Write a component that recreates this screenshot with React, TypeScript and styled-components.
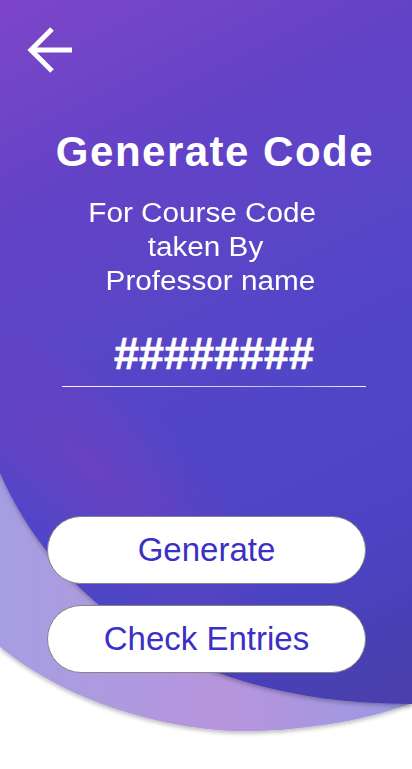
import React from "react";
import styled, { createGlobalStyle } from "styled-components";

const GlobalStyle = createGlobalStyle`
  html, body {
    margin: 0;
    padding: 0;
    background: #ffffff;
  }
  body {
    font-family: "Liberation Sans", Arial, sans-serif;
  }
  * { box-sizing: border-box; }
`;

const Screen = styled.div`
  position: relative;
  width: 412px;
  height: 769px;
  overflow: hidden;
  background: #ffffff;
`;

const Backdrop = styled.svg`
  position: absolute;
  inset: 0;
  width: 412px;
  height: 769px;
  z-index: 0;
`;

const Content = styled.main`
  position: relative;
  z-index: 1;
  display: flex;
  flex-direction: column;
  height: 100%;
`;

const BackButton = styled.button`
  display: flex;
  width: 50px;
  height: 48px;
  margin: 26px 0 0 24px;
  padding: 0;
  border: 0;
  background: transparent;
  cursor: pointer;
`;

const Title = styled.h1`
  margin: 54px 0 0;
  padding-left: 18px;
  font-size: 42px;
  line-height: 48px;
  font-weight: 700;
  letter-spacing: 1.5px;
  color: #ffffff;
  text-align: center;
`;

const Subtitle = styled.div`
  display: flex;
  flex-direction: column;
  margin-top: 20px;
  color: #ffffff;
`;

const SubLine = styled.span<{ $shift: number }>`
  display: block;
  font-size: 27px;
  line-height: 34px;
  text-align: center;
  transform: scaleX(1.1);
  padding-left: ${(p) => (p.$shift > 0 ? p.$shift * 2 : 0)}px;
  padding-right: ${(p) => (p.$shift < 0 ? -p.$shift * 2 : 0)}px;
`;

const CodeField = styled.div`
  margin: 30px 46px 0 62px;
  display: flex;
  flex-direction: column;
  align-items: center;
`;

const CodeText = styled.span`
  font-size: 45px;
  line-height: 52px;
  font-weight: 700;
  color: #ffffff;
  -webkit-text-stroke: 0.6px #ffffff;
`;

const Underline = styled.div`
  align-self: stretch;
  height: 1px;
  margin-top: 6px;
  background: linear-gradient(
    90deg,
    rgba(255, 255, 255, 0.95) 0%,
    rgba(255, 255, 255, 0.75) 55%,
    rgba(255, 255, 255, 0.6) 75%,
    rgba(255, 255, 255, 0.95) 100%
  );
`;

const Actions = styled.div`
  display: flex;
  flex-direction: column;
  gap: 21px;
  margin: 129px 46px 0 47px;
`;

const PillButton = styled.button`
  height: 68px;
  width: 100%;
  border: 1px solid #858585;
  border-radius: 34px;
  background: #ffffff;
  color: #3b2fc6;
  font-family: "Liberation Sans", Arial, sans-serif;
  font-size: 33px;
  cursor: pointer;
`;

const BackArrow = () => (
  <svg width="50" height="48" viewBox="0 0 50 48" aria-hidden="true">
    <path
      d="M28 3 L7 24 L28 45 M9 24 H48"
      fill="none"
      stroke="#ffffff"
      strokeWidth="5"
      strokeLinecap="butt"
      strokeLinejoin="miter"
    />
  </svg>
);

const Background = () => (
  <Backdrop viewBox="0 0 412 769" aria-hidden="true">
    <defs>
      <linearGradient id="lightFill" x1="0" y1="0" x2="412" y2="0" gradientUnits="userSpaceOnUse">
        <stop offset="0" stopColor="#a69ee1" />
        <stop offset="0.55" stopColor="#b795dd" />
        <stop offset="1" stopColor="#9a98e3" />
      </linearGradient>
      <linearGradient id="darkFill" x1="0" y1="0" x2="350" y2="700" gradientUnits="userSpaceOnUse">
        <stop offset="0" stopColor="#7d45c9" />
        <stop offset="0.25" stopColor="#6343c6" />
        <stop offset="0.6" stopColor="#5145c8" />
        <stop offset="0.85" stopColor="#4c43c2" />
        <stop offset="1" stopColor="#483fae" />
      </linearGradient>
      <radialGradient
        id="glow"
        cx="0"
        cy="0"
        r="1"
        gradientUnits="userSpaceOnUse"
        gradientTransform="translate(95 470) rotate(42) scale(220 85)"
      >
        <stop offset="0" stopColor="#7242be" stopOpacity="0.7" />
        <stop offset="1" stopColor="#7242be" stopOpacity="0" />
      </radialGradient>
      <filter id="softShadow" x="-10%" y="-10%" width="120%" height="130%">
        <feDropShadow dx="0" dy="2" stdDeviation="2" floodColor="#000000" floodOpacity="0.28" />
      </filter>
    </defs>
    <path
      d="M0 380 H412 V703 C380 715 330 728 260 731 C190 734 80 712 0 647 Z"
      fill="url(#lightFill)"
      filter="url(#softShadow)"
    />
    <g filter="url(#softShadow)">
      <path d="M0 0 H412 V704 C200 705 60 610 0 473 Z" fill="url(#darkFill)" />
      <path d="M0 0 H412 V704 C200 705 60 610 0 473 Z" fill="url(#glow)" />
    </g>
  </Backdrop>
);

export default function App() {
  return (
    <>
      <GlobalStyle />
      <Screen>
        <Background />
        <Content>
          <BackButton aria-label="Back">
            <BackArrow />
          </BackButton>
          <Title>Generate Code</Title>
          <Subtitle>
            <SubLine $shift={-3.5}>For Course Code</SubLine>
            <SubLine $shift={-0.5}>taken By</SubLine>
            <SubLine $shift={4}>Professor name</SubLine>
          </Subtitle>
          <CodeField>
            <CodeText>########</CodeText>
            <Underline />
          </CodeField>
          <Actions>
            <PillButton>Generate</PillButton>
            <PillButton>Check Entries</PillButton>
          </Actions>
        </Content>
      </Screen>
    </>
  );
}
